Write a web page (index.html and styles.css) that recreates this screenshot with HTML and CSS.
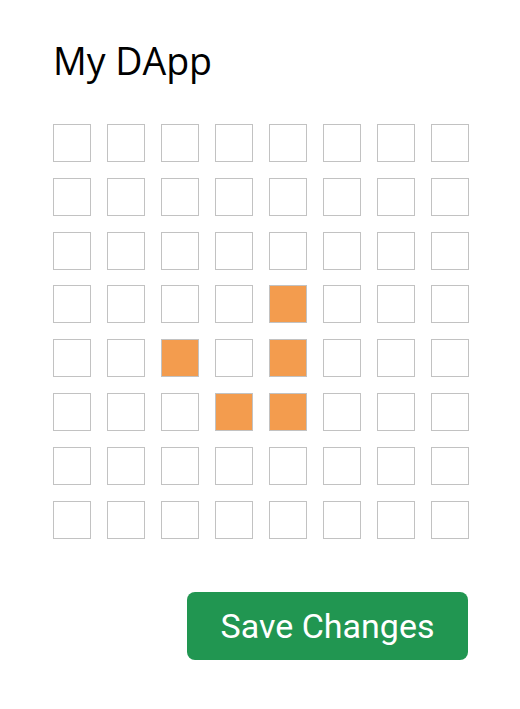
FILE: index.html
```html
<!DOCTYPE html>
<html>
<head>
<meta charset="utf-8">
<link rel="stylesheet" href="styles.css">
</head>
<body>
<div class="app">
  <h1 class="title">My DApp</h1>
  <div class="grid">
    <div class="cell"></div><div class="cell"></div><div class="cell"></div><div class="cell"></div><div class="cell"></div><div class="cell"></div><div class="cell"></div><div class="cell"></div>
    <div class="cell"></div><div class="cell"></div><div class="cell"></div><div class="cell"></div><div class="cell"></div><div class="cell"></div><div class="cell"></div><div class="cell"></div>
    <div class="cell"></div><div class="cell"></div><div class="cell"></div><div class="cell"></div><div class="cell"></div><div class="cell"></div><div class="cell"></div><div class="cell"></div>
    <div class="cell"></div><div class="cell"></div><div class="cell"></div><div class="cell"></div><div class="cell on"></div><div class="cell"></div><div class="cell"></div><div class="cell"></div>
    <div class="cell"></div><div class="cell"></div><div class="cell on"></div><div class="cell"></div><div class="cell on"></div><div class="cell"></div><div class="cell"></div><div class="cell"></div>
    <div class="cell"></div><div class="cell"></div><div class="cell"></div><div class="cell on"></div><div class="cell on"></div><div class="cell"></div><div class="cell"></div><div class="cell"></div>
    <div class="cell"></div><div class="cell"></div><div class="cell"></div><div class="cell"></div><div class="cell"></div><div class="cell"></div><div class="cell"></div><div class="cell"></div>
    <div class="cell"></div><div class="cell"></div><div class="cell"></div><div class="cell"></div><div class="cell"></div><div class="cell"></div><div class="cell"></div><div class="cell"></div>
  </div>
  <div class="actions">
    <button class="save">Save Changes</button>
  </div>
</div>
</body>
</html>
```
FILE: styles.css
```css
html, body {
  margin: 0;
  padding: 0;
  background: #ffffff;
}
.app {
  width: 415px;
  padding: 38px 0 0 53px;
}
.title {
  margin: 0;
  font-family: "Open Sans", sans-serif;
  font-weight: 400;
  font-size: 37.5px;
  line-height: 46px;
  color: #000;
}
.grid {
  margin-top: 40px;
  display: grid;
  grid-template-columns: repeat(8, 38px);
  grid-auto-rows: 38px;
  column-gap: 16px;
  row-gap: 15.8px;
}
.cell {
  box-sizing: border-box;
  border: 1px solid #c2c2c2;
  background: #fff;
}
.cell.on {
  background: #f39c4e;
}
.actions {
  margin-top: 53px;
  display: flex;
  justify-content: flex-end;
}
.save {
  width: 281px;
  height: 68px;
  border: none;
  border-radius: 8px;
  background: #219651;
  color: #fff;
  font-family: Roboto, sans-serif;
  font-size: 34px;
  font-weight: 400;
  padding: 0;
}
```
